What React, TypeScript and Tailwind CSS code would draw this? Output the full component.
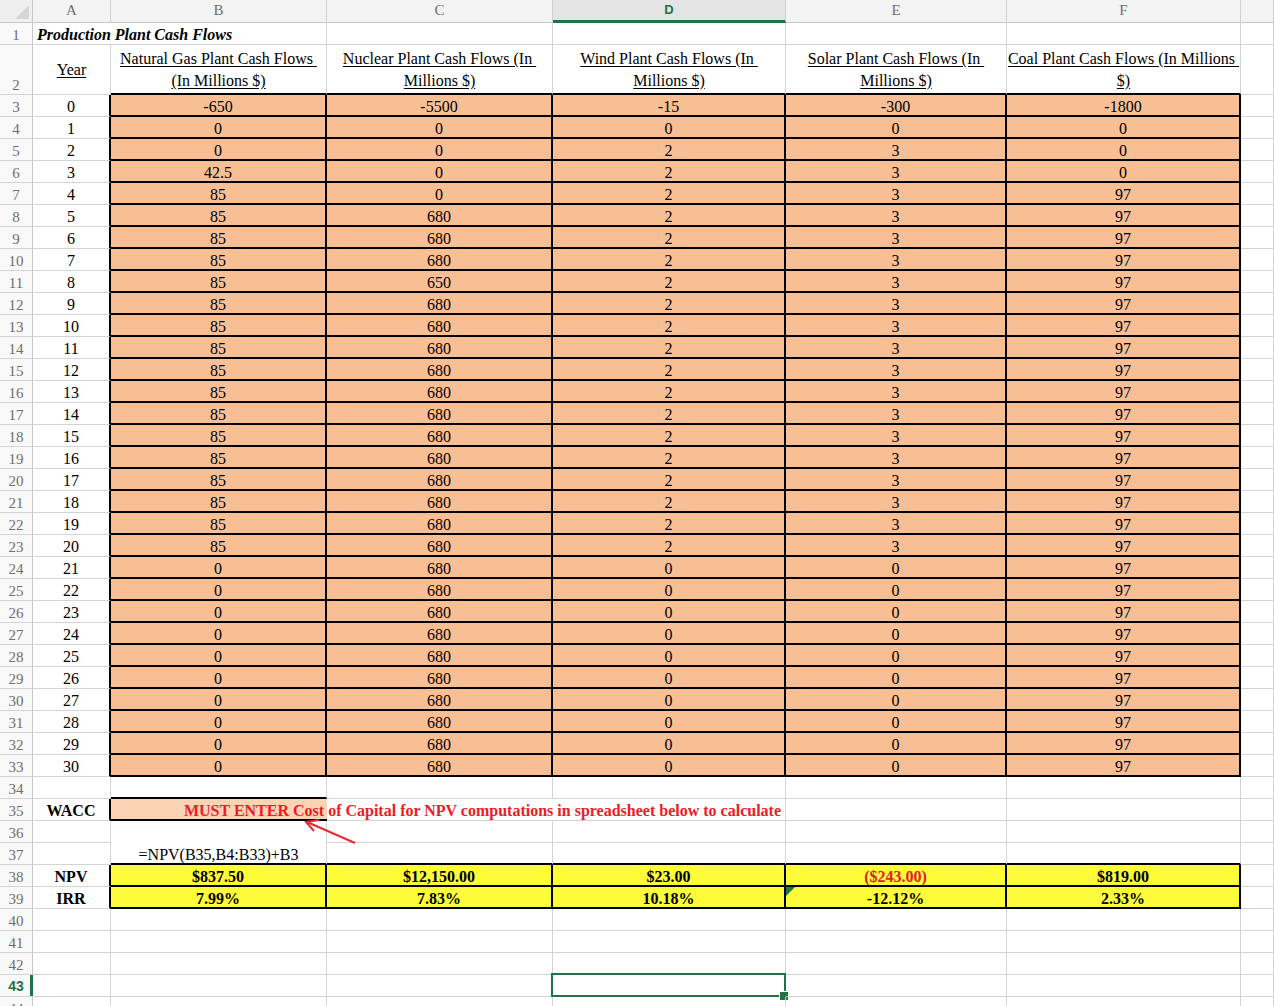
import React from 'react';

// column widths: row header, A..F, G (partial)
const colLetters = ['A', 'B', 'C', 'D', 'E', 'F', ''];

const years = Array.from({ length: 31 }, (_, i) => i);

const flows: number[][] = [
  years.map((y) => (y === 0 ? -650 : y < 3 ? 0 : y === 3 ? 42.5 : y <= 20 ? 85 : 0)),
  years.map((y) => (y === 0 ? -5500 : y < 5 ? 0 : y === 8 ? 650 : 680)),
  years.map((y) => (y === 0 ? -15 : y === 1 ? 0 : y <= 20 ? 2 : 0)),
  years.map((y) => (y === 0 ? -300 : y === 1 ? 0 : y <= 20 ? 3 : 0)),
  years.map((y) => (y === 0 ? -1800 : y < 4 ? 0 : 97)),
];

const headers = [
  ['Natural Gas Plant Cash Flows ', '(In Millions $)'],
  ['Nuclear Plant Cash Flows (In ', 'Millions $)'],
  ['Wind Plant Cash Flows (In ', 'Millions $)'],
  ['Solar Plant Cash Flows (In ', 'Millions $)'],
  ['Coal Plant Cash Flows (In Millions ', '$)'],
];

const npv = ['$837.50', '$12,150.00', '$23.00', '($243.00)', '$819.00'];
const irr = ['7.99%', '7.83%', '10.18%', '-12.12%', '2.33%'];

const gridR = 'border-r border-r-[#d4d4d4]';
const blackR = 'border-r-2 border-r-black';
const noR = 'border-r-0';
const gridB = 'border-b border-b-[#d4d4d4]';
const blackB = 'border-b-2 border-b-black';
const noB = 'border-b-0';

function cellFor(r: number, c: number) {
  let right = gridR;
  let bottom = gridB;
  let bg = '';
  let content: React.ReactNode = null;
  let extra = '';

  if (r === 1 && c === 0) {
    right = noR;
    content = (
      <span className="absolute left-[4px] whitespace-nowrap font-bold italic">Production Plant Cash Flows</span>
    );
  }
  if (r === 2) {
    if (c === 0) content = <span className="underline underline-offset-2">Year</span>;
    if (c >= 1 && c <= 5) {
      bottom = blackB;
      content = (
        <span className="whitespace-pre text-center leading-[22px] underline underline-offset-2">
          {headers[c - 1][0]}
          <br />
          {headers[c - 1][1]}
        </span>
      );
    }
  }
  if (r >= 3 && r <= 33) {
    if (c === 0) {
      right = blackR;
      content = r - 3;
    }
    if (c >= 1 && c <= 5) {
      right = blackR;
      bottom = blackB;
      bg = 'bg-[#f8bf95]';
      content = flows[c - 1][r - 3];
    }
  }
  if (r === 34 && c === 1) bottom = blackB;
  if (r === 35) {
    if (c === 0) {
      right = blackR;
      content = <span className="font-bold">WACC</span>;
    }
    if (c === 1) {
      right = noR;
      bottom = blackB;
      bg = 'bg-[#fbd4b5]';
    }
    if (c === 2) right = noR;
    if (c === 3)
      content = (
        <span className="absolute right-[4px] whitespace-nowrap font-bold text-[#ef1b24]">
          MUST ENTER Cost of Capital for NPV computations in spreadsheet below to calculate
        </span>
      );
  }
  if (r === 36 && c === 1) bottom = noB;
  if (r === 37) {
    if (c === 1) content = '=NPV(B35,B4:B33)+B3';
    if (c >= 1 && c <= 5) bottom = blackB;
  }
  if (r === 38 || r === 39) {
    if (c === 0) {
      right = blackR;
      content = <span className="font-bold">{r === 38 ? 'NPV' : 'IRR'}</span>;
    }
    if (c >= 1 && c <= 5) {
      right = blackR;
      bottom = blackB;
      bg = 'bg-[#fefc3a]';
      const v = r === 38 ? npv[c - 1] : irr[c - 1];
      content = <span className={v.startsWith('(') ? 'font-bold text-[#e3202a]' : 'font-bold'}>{v}</span>;
      if (r === 39 && c === 4) {
        extra = 'err';
      }
    }
  }
  if (r === 43 && c === 3) extra = 'sel';

  const pad = r === 2 ? 'pt-[1px]' : 'pt-[3px]';

  return (
    <div key={`${r}-${c}`} className={`relative flex items-center justify-center ${pad} ${right} ${bottom} ${bg}`}>
      {extra === 'err' && (
        <svg className="absolute left-0 top-0" width="9" height="9" viewBox="0 0 9 9">
          <polygon points="0,0 9,0 0,9" fill="#1e7b34" />
        </svg>
      )}
      {content}
      {extra === 'sel' && (
        <>
          <div className="absolute -left-[2px] -top-[2px] -right-[1px] -bottom-[1px] border-2 border-[#217346]" />
          <div className="absolute -right-[4px] -bottom-[5px] h-[10px] w-[10px] border border-white bg-[#217346]" />
        </>
      )}
    </div>
  );
}

export default function App() {
  const rows = Array.from({ length: 44 }, (_, i) => i + 1);
  return (
    <div className="relative h-[1006px] w-[1274px] overflow-hidden bg-white font-['Liberation_Serif',serif] text-[16px] text-black">
      <div className="grid grid-cols-[33px_78px_216px_226px_233px_221px_234px_1fr] grid-rows-[23px_22px_50px] auto-rows-[22px]">
        {/* column header row */}
        <div className="relative border-r border-b border-r-[#c8c8c8] border-b-[#c8c8c8] bg-[#efefef]">
          <svg className="absolute right-[3px] bottom-[3px]" width="14" height="14" viewBox="0 0 14 14">
            <polygon points="14,0 14,14 0,14" fill="#d6d6d6" />
          </svg>
        </div>
        {colLetters.map((l) =>
          l === 'D' ? (
            <div
              key={l}
              className="flex items-center justify-center border-r border-r-[#d0d0d0] border-b-[3px] border-b-[#217346] bg-[#e4e4e4] font-['Liberation_Sans',sans-serif] text-[13px] font-bold text-[#217346]"
            >
              D
            </div>
          ) : (
            <div
              key={l || 'G'}
              className="flex items-center justify-center border-r border-b border-r-[#d0d0d0] border-b-[#c8c8c8] bg-[#f3f3f3] pb-[2px] text-[15px] text-[#707070]"
            >
              {l}
            </div>
          )
        )}

        {rows.map((r) => (
          <React.Fragment key={r}>
            {r === 43 ? (
              <div className="relative flex items-center justify-center border-r border-b border-r-[#c8c8c8] border-b-[#d4d4d4] bg-[#f9f9f9] pt-[2px] font-['Liberation_Sans',sans-serif] text-[14px] font-bold text-[#217346]">
                43
                <div className="absolute right-[-1px] top-0 bottom-0 w-[3px] bg-[#217346]" />
              </div>
            ) : (
              <div className="flex items-end justify-center border-r border-b border-r-[#c8c8c8] border-b-[#d4d4d4] bg-[#f9f9f9] text-[15px] leading-[18px] text-[#6e6e6e]">
                {r}
              </div>
            )}
            {[0, 1, 2, 3, 4, 5, 6].map((c) => cellFor(r, c))}
          </React.Fragment>
        ))}
      </div>

      {/* arrow pointing at the WACC input cell */}
      <svg className="pointer-events-none absolute left-0 top-0" width="1274" height="1006">
        <line x1="355" y1="843" x2="307" y2="822" stroke="#ea2a33" strokeWidth="2" />
        <polyline points="319,820 306,822 314,831" fill="none" stroke="#ea2a33" strokeWidth="2" />
      </svg>
    </div>
  );
}
